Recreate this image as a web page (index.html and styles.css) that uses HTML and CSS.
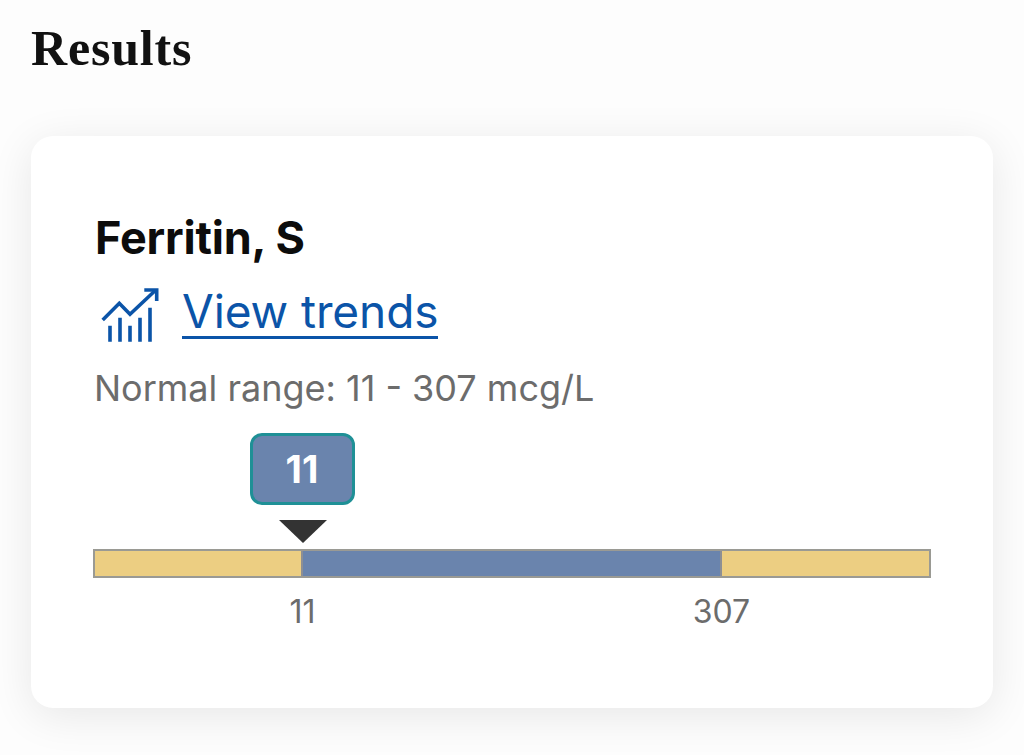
FILE: index.html
```html
<!DOCTYPE html>
<html lang="en">
<head>
    <meta charset="UTF-8">
    <meta name="viewport" content="width=device-width, initial-scale=1.0">
    <title>Results</title>
    <link rel="stylesheet" href="styles.css">
</head>
<body>
    <h1 class="page-title">Results</h1>

    <div class="result-card">
        <h2 class="test-name">Ferritin, S</h2>

        <div class="trends">
            <svg class="trends-icon" viewBox="0 0 60 60" fill="none" stroke="#0b54a8" stroke-width="3.6">
                <polyline points="2.7,34 19.3,17.3 30,28.3 55,4.7"/>
                <polyline points="44.3,4 56.7,4 56.7,15"/>
                <path d="M10 39.7V55.7M20 31.7V55.7M30 39.7V55.7M40 31.7V55.7M50 21.7V55.7"/>
            </svg>
            <a class="trends-link" href="#">View trends</a>
        </div>

        <p class="normal-range">Normal range: 11 - 307 mcg/L</p>

        <!-- Gauge -->
        <div class="gauge">
            <div class="marker">
                <div class="marker-value">11</div>
                <div class="marker-arrow"></div>
            </div>
            <div class="gauge-bar">
                <div class="zone zone-low"></div>
                <div class="zone zone-normal"></div>
                <div class="zone zone-high"></div>
            </div>
            <div class="gauge-scale">
                <span class="scale-label scale-min">11</span>
                <span class="scale-label scale-max">307</span>
            </div>
        </div>
    </div>
</body>
</html>
```

FILE: styles.css
```css
* {
    margin: 0;
    padding: 0;
    box-sizing: border-box;
}
body {
    background-color: #fdfdfd;
    font-family: 'Inter', 'Liberation Sans', sans-serif;
    height: 755px;
    overflow: hidden;
    padding: 21px 31px 0;
}
.page-title {
    font-family: 'Liberation Serif', serif;
    font-size: 50px;
    font-weight: 700;
    line-height: 54px;
    letter-spacing: 0.8px;
    color: #111;
}
.result-card {
    background-color: #fff;
    border-radius: 22px;
    box-shadow: 0 8px 44px rgba(0, 0, 0, 0.09);
    height: 572px;
    margin-top: 61px;
    padding: 74px 62px 0;
}
.test-name {
    font-size: 45px;
    font-weight: 700;
    line-height: 56px;
    letter-spacing: -0.2px;
    color: #0c0c0c;
    padding-left: 2px;
}
.trends {
    display: flex;
    align-items: center;
    gap: 22px;
    margin-top: 16px;
    padding-left: 7px;
}
.trends-icon {
    width: 60px;
    height: 60px;
    flex-shrink: 0;
    margin: 4px 0 -4px;
}
.trends-link {
    color: #0b54a8;
    font-size: 46px;
    line-height: 50px;
    letter-spacing: -0.1px;
    text-decoration: none;
    border-bottom: 3px solid #0b54a8;
}
.normal-range {
    color: #6c6c6c;
    font-size: 36px;
    line-height: 44px;
    margin-top: 24px;
    padding-left: 1px;
}
.gauge {
    margin-top: 23px;
}
.marker {
    display: flex;
    flex-direction: column;
    align-items: center;
    width: 105px;
    margin-left: calc(25% - 53px);
}
.marker-value {
    width: 105px;
    height: 72px;
    background-color: #6a84ad;
    border: 3px solid #1f9096;
    border-radius: 12px;
    color: #fff;
    font-size: 38px;
    font-weight: 700;
    line-height: 66px;
    text-align: center;
}
.marker-arrow {
    width: 0;
    height: 0;
    margin-top: 15px;
    margin-left: 2px;
    border-left: 24px solid transparent;
    border-right: 24px solid transparent;
    border-top: 23px solid #333;
}
.gauge-bar {
    display: grid;
    grid-template-columns: 206px 421px 1fr;
    height: 29px;
    margin-top: 6px;
    border: 2px solid #9a9a94;
}
.zone-low, .zone-high {
    background-color: #ecce82;
}
.zone-normal {
    background-color: #6a84ad;
    border-left: 2px solid #8d8f94;
    border-right: 2px solid #8d8f94;
}
.gauge-scale {
    display: grid;
    grid-template-columns: 1fr 2fr 1fr;
    margin-top: 14px;
}
.scale-label {
    color: #6c6c6c;
    font-size: 32px;
    line-height: 40px;
    transform: translateX(-50%);
    justify-self: start;
}
.scale-min {
    grid-column: 2;
}
.scale-max {
    grid-column: 3;
}
```
